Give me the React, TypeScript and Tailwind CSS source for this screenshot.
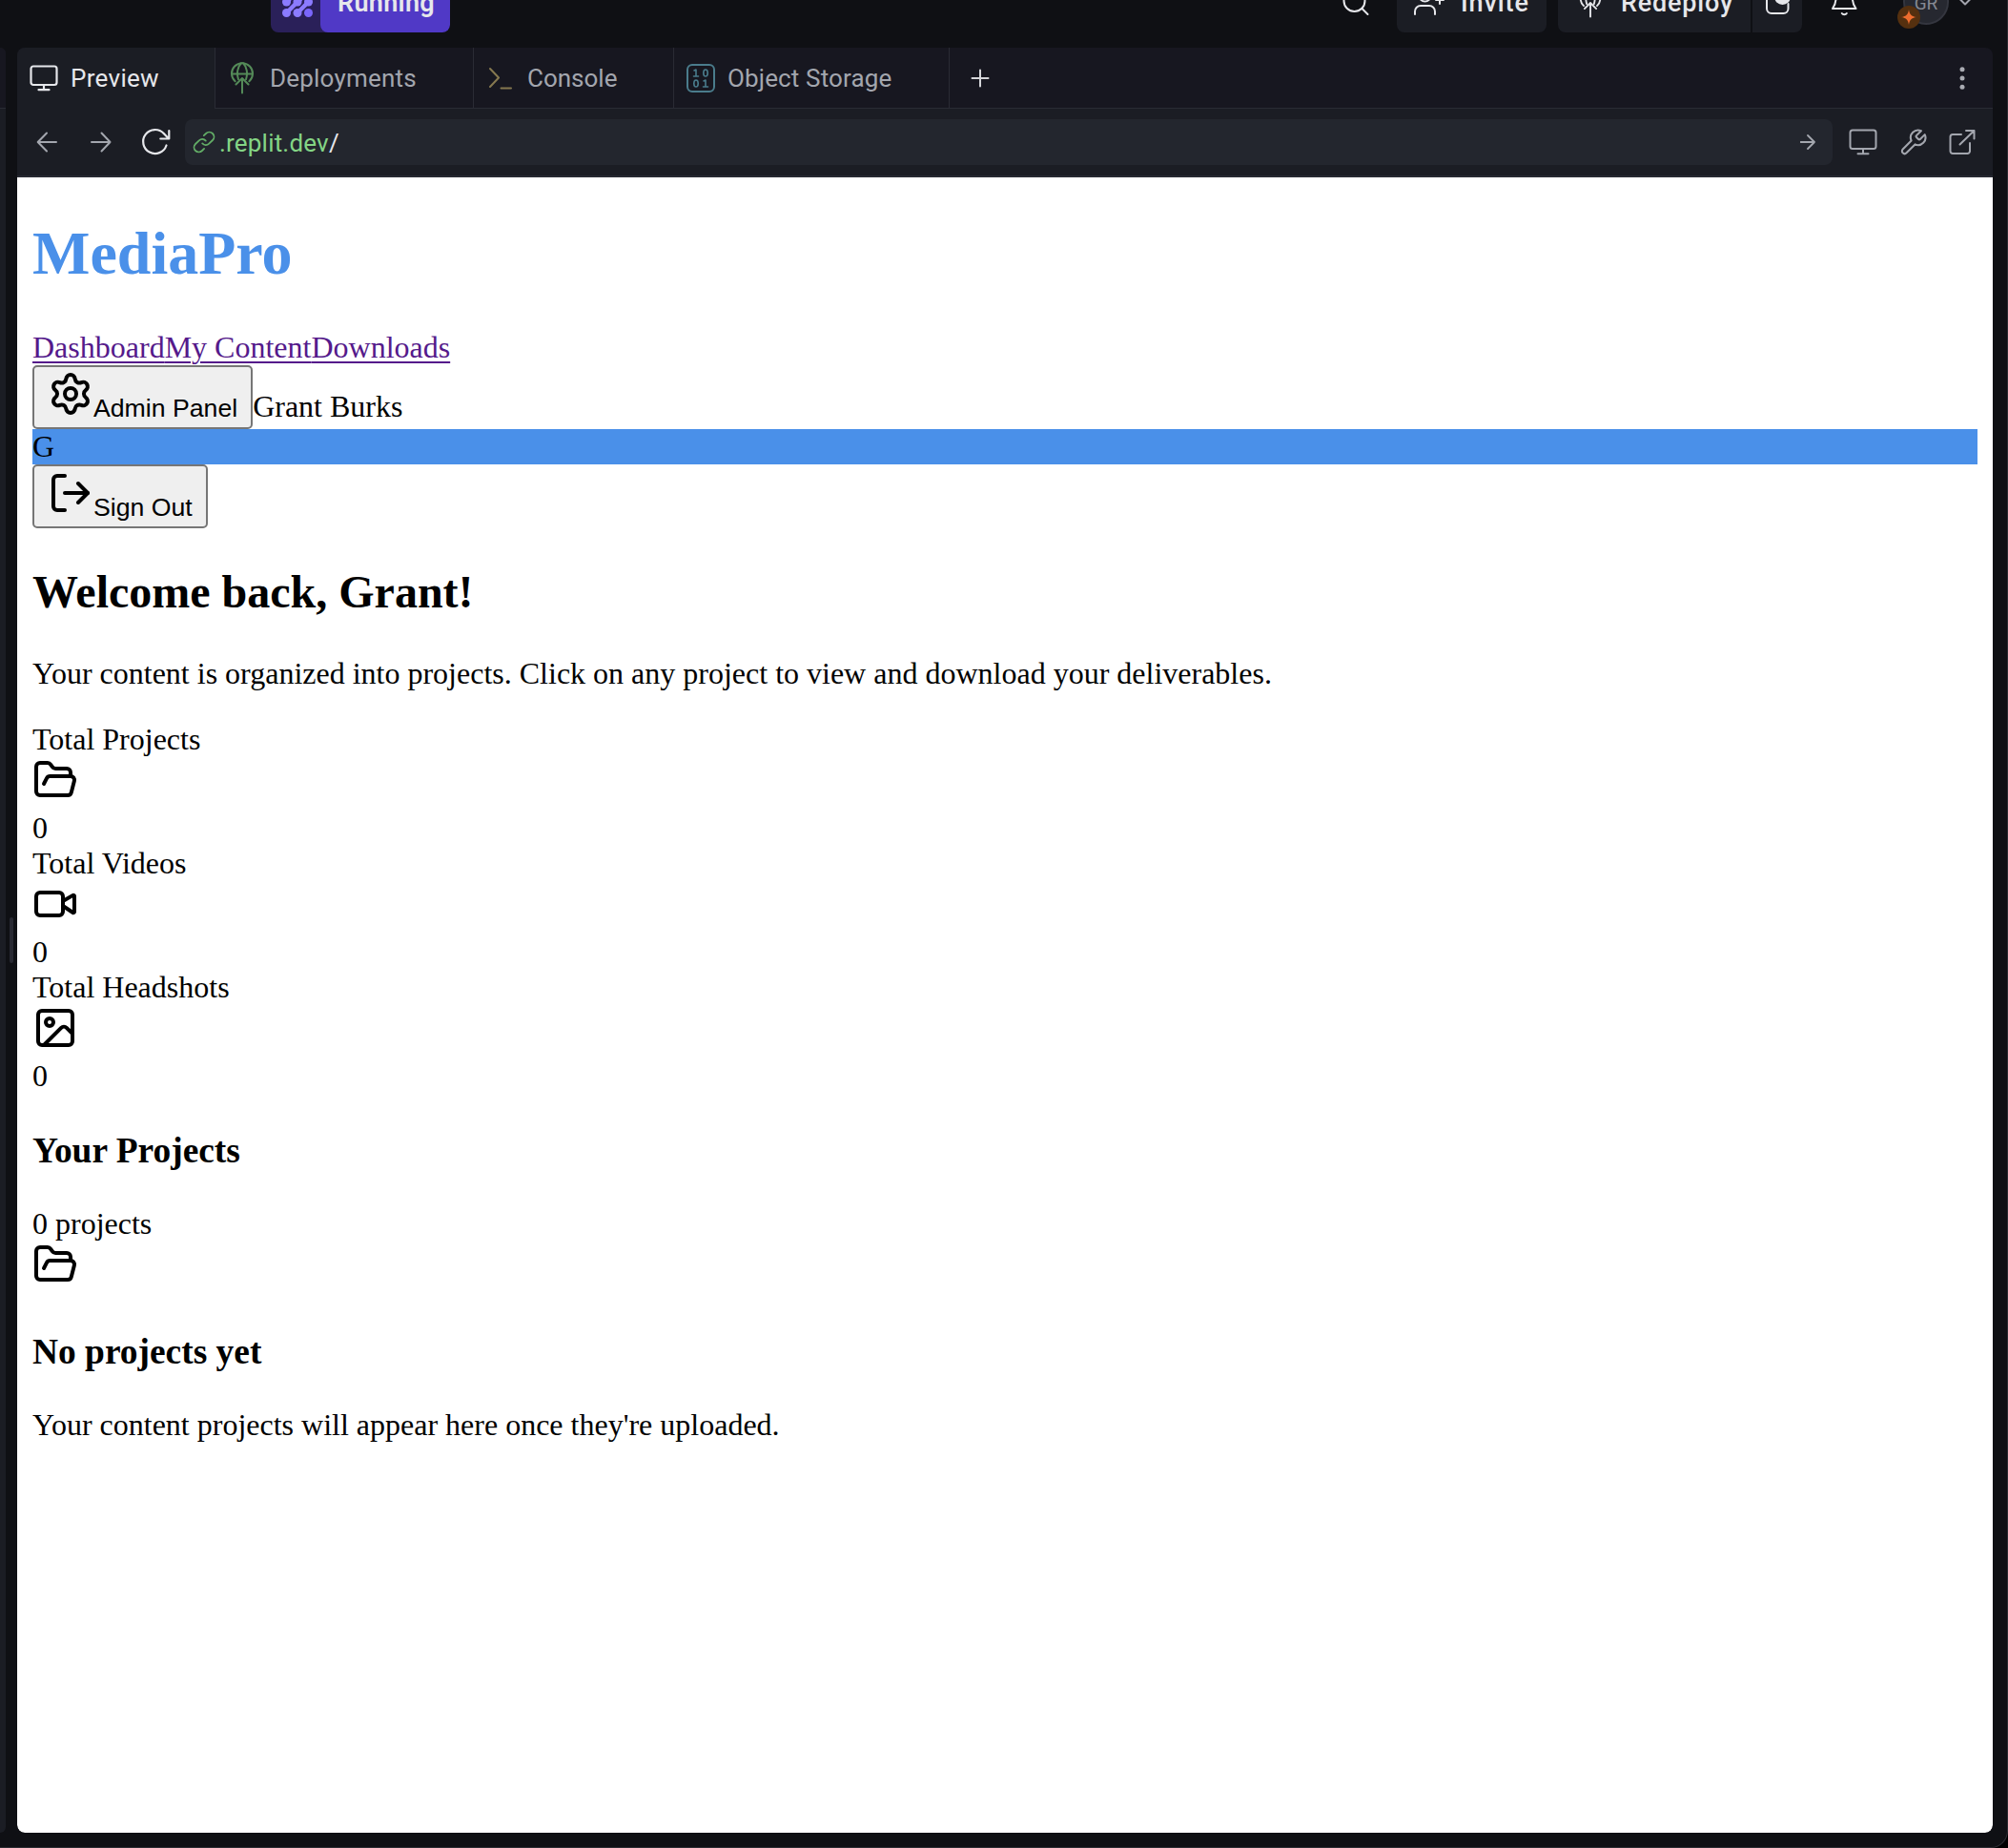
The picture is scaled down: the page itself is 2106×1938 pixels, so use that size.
import React from "react";
import { Settings, LogOut, FolderOpen, Video, Image as ImageIcon } from "lucide-react";

const stroke = {
  fill: "none",
  stroke: "currentColor",
  strokeLinecap: "round" as const,
  strokeLinejoin: "round" as const,
};

function Deploy({ className }: { className: string }) {
  return (
    <svg className={className} viewBox="0 0 24 34" {...stroke} strokeWidth={2}>
      <path d="M4.600 20.300A11 11 0 1 1 19.400 20.300" />
      <path d="M1 12.500h22" />
      <path d="M8 18.200C6 12 7 5 11 1.200M16 18.200C18 12 17 5 13 1.200" />
      <path d="M5.500 23.500 12 17l6.500 6.500M12 17v15.500" />
    </svg>
  );
}

function Monitor({ className, w }: { className: string; w: number }) {
  return (
    <svg className={className} viewBox="0 0 30 28" {...stroke} strokeWidth={w}>
      <rect x="1.500" y="1.500" width="27" height="19.500" rx="2.500" />
      <path d="M15 21v5M9.500 26.200h11" />
    </svg>
  );
}

function TopBar() {
  return (
    <header className="flex h-[50px] shrink-0 overflow-hidden">
      <div className="-mt-[30px] flex h-16 w-full items-center pl-[284px] text-[#e6e7eb]">
        <div className="flex h-16 w-[188px] shrink-0 overflow-hidden rounded-lg bg-[#2a2059]">
          <div className="flex w-[52px] items-center justify-center">
            <svg className="ml-1 h-8 w-8" viewBox="0 0 32 32" fill="#8b7bff" stroke="#8b7bff">
              <g stroke="none">
                <circle cx="4.500" cy="5" r="4.300" /><circle cx="16" cy="5" r="4.300" /><circle cx="27.500" cy="5" r="4.300" />
                <circle cx="4.500" cy="16" r="4.500" /><circle cx="16" cy="16" r="4.500" /><circle cx="27.500" cy="16" r="4.500" />
                <circle cx="4.500" cy="27.500" r="4.500" /><circle cx="16" cy="27.500" r="4.500" /><circle cx="27.500" cy="27.500" r="4.500" fill="#7a66fb" />
              </g>
              <path d="M5.500 26.500 15 17M17 26.500 26.500 17M5.500 15 15 6M17 15l9.500-9" strokeWidth="4.500" />
            </svg>
          </div>
          <div className="flex flex-1 items-center justify-center rounded-lg bg-[#5039c6] pt-[2px] pl-[2px] font-[Roboto] text-[27px] leading-[30px] font-semibold tracking-[0.3px]">
            Running
          </div>
        </div>
        <div className="flex-1" />
        <svg className="mr-[27px] h-8 w-8 shrink-0" viewBox="0 0 32 32" {...stroke} strokeWidth={2}>
          <circle cx="14.500" cy="15" r="11" />
          <path d="m22.500 23 6 6" />
        </svg>
        <button className="mr-3 flex h-16 w-[157px] shrink-0 items-center rounded-lg bg-[#1b1d24] pt-[2px] pl-[17px] font-[Roboto] text-[27px] leading-[30px] font-medium">
          <svg className="mr-[16px] h-8 w-[34px]" viewBox="0 0 34 32" {...stroke} strokeWidth={2}>
            <circle cx="12.500" cy="8.500" r="6" />
            <path d="M2 28v-3a6 6 0 0 1 6-6h9a6 6 0 0 1 6 6v3M28 9v8M24 13h8" />
          </svg>
          <span className="tracking-[0.9px]">Invite</span>
        </button>
        <button className="mr-0.5 flex h-16 w-[202px] shrink-0 items-center rounded-l-lg bg-[#1b1d24] pt-[2px] pl-[22px] font-[Roboto] text-[27px] leading-[30px] font-medium">
          <Deploy className="mr-[20px] h-[32px] w-6" />
          <span className="tracking-[0.8px]">Redeploy</span>
        </button>
        <button className="mr-[28px] flex h-16 w-[52px] shrink-0 items-center rounded-r-lg bg-[#1b1d24] pl-[13px]">
          <svg className="h-8 w-8" viewBox="0 0 32 32" {...stroke} strokeWidth={2}>
            <path d="M14 6H7a5 5 0 0 0-5 5v12a5 5 0 0 0 5 5h12.500a5 5 0 0 0 5-5v-5" />
            <circle cx="18.500" cy="10.500" r="8.500" fill="currentColor" stroke="none" />
          </svg>
        </button>
        <svg className="mr-[46px] h-8 w-8 shrink-0" viewBox="0 0 32 32" {...stroke} strokeWidth={2}>
          <path d="M4 23h24.500M4 23c3-4 3.500-7 3.500-11a8.700 8.700 0 0 1 17.400 0c0 4 .6 7 3.600 11M13.800 28c1 1.500 4 1.500 5 0" />
        </svg>
        <div className="relative mr-[10px] flex h-12 w-12 shrink-0 items-center justify-center rounded-full border-2 border-[#34363f] bg-[#262830] pt-[2px] font-[Roboto] text-[19px] leading-none text-[#868993]">
          GR
          <svg className="absolute top-[26px] -left-2 h-6 w-6" viewBox="0 0 24 24">
            <circle cx="12" cy="12" r="12" fill="#55300f" />
            <path d="M12 4c.7 5 2.500 7.200 8 8-5.500.8-7.300 3-8 8-.7-5-2.500-7.200-8-8 5.500-.8 7.300-3 8-8Z" fill="#ee6d2f" />
          </svg>
        </div>
        <svg className="mr-[37px] h-[10px] w-[14px] shrink-0" viewBox="0 0 14 10" {...stroke} stroke="#a2a4ad" strokeWidth={2}>
          <path d="m2 2.500 5 5 5-5" />
        </svg>
      </div>
    </header>
  );
}

function Tabs() {
  const tab = "flex h-16 items-center border-r-[1px] border-b-[1px] border-[#2a2b34] text-[#a3a6ae]";
  return (
    <div className="flex h-16 shrink-0 bg-[#171720] font-[Roboto] text-[26px] leading-8">
      <div className="flex h-16 w-[208px] items-center border-r-[1px] border-[#2a2b34] bg-[#1b1d24] pl-[13px] text-[#e6e7eb]">
        <Monitor className="mr-[13px] h-7 w-[30px]" w={2.2} />
        <span className="tracking-[0.3px]">Preview</span>
      </div>
      <div className={tab + " w-[271px] pl-4"}>
        <Deploy className="mr-[17px] h-[34px] w-6 text-[#548a58]" />
        <span className="tracking-[0.2px]">Deployments</span>
      </div>
      <div className={tab + " w-[210px] pl-4"}>
        <svg className="mr-[16px] h-6 w-6" viewBox="0 0 24 24" {...stroke} stroke="#85784f" strokeWidth={2}>
          <path d="m1 2 9 9.500L1 21M12.500 22.500H23" />
        </svg>
        <span>Console</span>
      </div>
      <div className={tab + " w-[289px] pl-[13px]"}>
        <svg className="mr-[13px] h-[30px] w-[30px] text-[#4a7c8c]" viewBox="0 0 30 30" {...stroke} strokeWidth={2}>
          <rect x="1" y="1" width="28" height="28" rx="5" />
          <g strokeWidth="1.600">
            <path d="m8 7 2-1v7M7.500 13h5" />
            <ellipse cx="20" cy="9.500" rx="2.200" ry="3.500" />
            <ellipse cx="10" cy="20.500" rx="2.200" ry="3.500" />
            <path d="m18 18 2-1v7M17.500 24h5" />
          </g>
        </svg>
        <span className="tracking-[0.15px]">Object Storage</span>
      </div>
      <div className="flex flex-1 items-center justify-between border-b-[1px] border-[#2a2b34] pr-[28px] pl-[22px]">
        <svg className="h-5 w-5" viewBox="0 0 20 20" {...stroke} stroke="#d4d5d9" strokeWidth={2}>
          <path d="M10 1.500v17M1.500 10h17" />
        </svg>
        <svg className="h-6 w-2" viewBox="0 0 8 24" fill="#a9abb2">
          <circle cx="4" cy="2.700" r="2.500" /><circle cx="4" cy="12" r="2.500" /><circle cx="4" cy="21.300" r="2.500" />
        </svg>
      </div>
    </div>
  );
}

function AddressBar() {
  return (
    <div className="flex h-[72px] shrink-0 items-center border-b-2 border-[#272932] bg-[#1b1d24] pr-[18px] pl-[20px] text-[#a3a6ae]">
      <svg className="mr-[33px] h-6 w-[24px]" viewBox="0 0 24 24" {...stroke} strokeWidth={2}>
        <path d="M21 12H2M11 2.500 1.700 12l9.300 9.500" />
      </svg>
      <svg className="mr-[29px] h-6 w-[24px]" viewBox="0 0 24 24" {...stroke} strokeWidth={2}>
        <path d="M1 12h19.500M11.500 2.500 20.500 12l-9 9.500" />
      </svg>
      <svg className="mr-[15px] h-[30px] w-[31px] text-[#e6e7eb]" viewBox="0 0 31 30" {...stroke} strokeWidth={2.2}>
        <path d="M26.500 18.500A12.500 12.500 0 1 1 23.800 6l5 5.200M29.300 3v8.500h-9" />
      </svg>
      <div className="flex h-12 flex-1 items-center rounded-lg bg-[#23262e] pr-[18px] pl-[8px] font-[Roboto] text-[26px] leading-8">
        <svg className="mr-[4px] h-[24px] w-[24px] text-[#62ac66]" viewBox="0 0 24 24" {...stroke} strokeWidth={1.8}>
          <path d="M10.200 13.400a5 5 0 0 0 7 .3l3.800-3.700a4.900 4.900 0 0 0-7-7l-2.200 2.100" />
          <path d="M13.800 10.600a5 5 0 0 0-7-.3L3 14a4.900 4.900 0 0 0 7 7l2.100-2.100" />
        </svg>
        <span className="pt-[2px] tracking-[0.2px] text-[#84d585]">.replit.dev</span>
        <span className="flex-1 pt-[2px] text-[#e6e7eb]">/</span>
        <svg className="h-4 w-4" viewBox="0 0 16 16" {...stroke} strokeWidth={1.800}>
          <path d="M0.500 8H15M8 1l7 7-7 7" />
        </svg>
      </div>
      <Monitor className="ml-[17px] h-[28px] w-[30px]" w={2} />
      <svg className="ml-[22px] h-[31px] w-[31px]" viewBox="0 0 24 24" {...stroke} strokeWidth={1.600}>
        <path d="M14.700 6.300a1 1 0 0 0 0 1.400l1.600 1.600a1 1 0 0 0 1.400 0l3.770-3.770a6 6 0 0 1-7.940 7.940l-6.910 6.910a2.120 2.120 0 0 1-3-3l6.910-6.910a6 6 0 0 1 7.940-7.940l-3.760 3.760z" />
      </svg>
      <svg className="ml-[22px] h-[28px] w-[28px]" viewBox="0 0 28 28" {...stroke} strokeWidth={2}>
        <path d="M13 6H4a2.500 2.500 0 0 0-2.500 2.500v15A2.500 2.500 0 0 0 4 26h15.500a2.500 2.500 0 0 0 2.500-2.500V15M11.500 16.500 26.500 2M18 2h8.500v8.500" />
      </svg>
    </div>
  );
}

const rawButton =
  "inline-block rounded-[5px] border-2 border-[#767676] bg-[#efefef] px-[14px] pt-1 pb-[5px] align-baseline font-['Liberation_Sans',sans-serif] text-[26.67px] leading-[30px] text-black";

function Stat({ label, children }: { label: string; children: React.ReactNode }) {
  return (
    <>
      <div>{label}</div>
      <div className="h-14">{children}</div>
      <div>0</div>
    </>
  );
}

function Page() {
  return (
    <main className="flex-1 overflow-hidden rounded-b-lg bg-white px-4 font-['Liberation_Serif',serif] text-[32px] leading-[37px] text-black">
      <h1 className="mt-[43px] mb-[43px] text-[64px] leading-[74px] font-bold text-[#4a90e9]">MediaPro</h1>
      <nav className="text-[#551a8b]">
        {["Dashboard", "My Content", "Downloads"].map((t) => (
          <a key={t} className="underline decoration-2 underline-offset-[4px]">{t}</a>
        ))}
      </nav>
      <div className="flex h-[67px] items-baseline">
        <button className={rawButton}>
          <Settings className="inline align-baseline" size={48} />Admin Panel
        </button>
        <span>Grant Burks</span>
      </div>
      <div className="bg-[#4a90e9]">G</div>
      <div className="flex h-[67px] items-baseline">
        <button className={rawButton}>
          <LogOut className="inline align-baseline" size={48} />Sign Out
        </button>
      </div>
      <h2 className="my-[40px] text-[48px] leading-[54px] font-bold">Welcome back, Grant!</h2>
      <p className="mb-8">
        Your content is organized into projects. Click on any project to view and download your deliverables.
      </p>
      <Stat label="Total Projects"><FolderOpen size={48} /></Stat>
      <Stat label="Total Videos"><Video size={48} /></Stat>
      <Stat label="Total Headshots"><ImageIcon size={48} /></Stat>
      <h3 className="mt-[38px] mb-[37px] text-[37.44px] leading-[43px] font-bold">Your Projects</h3>
      <div>0 projects</div>
      <div className="h-14"><FolderOpen size={48} /></div>
      <h3 className="mt-[38px] mb-[37px] text-[37.44px] leading-[43px] font-bold">No projects yet</h3>
      <p>Your content projects will appear here once they're uploaded.</p>
    </main>
  );
}

export default function App() {
  return (
    <div className="h-[1938px] w-[2106px] overflow-hidden bg-black">
      <div className="flex h-full flex-col overflow-hidden rounded-br-[18px] border-r border-b border-[#2c2d33] bg-[#0f1014]">
        <TopBar />
        <div className="flex h-[1872px]">
          <aside className="w-[6px] shrink-0 overflow-hidden rounded-r-lg bg-[#1b1d24]">
            <div className="h-16 border-b border-[#2a2b34] bg-[#171720]" />
          </aside>
          <div className="flex w-3 items-center justify-center">
            <div className="h-12 w-1 rounded-full bg-[#282932]" />
          </div>
          <section className="flex w-[2072px] shrink-0 flex-col overflow-hidden rounded-lg">
            <Tabs />
            <AddressBar />
            <Page />
          </section>
        </div>
      </div>
    </div>
  );
}
